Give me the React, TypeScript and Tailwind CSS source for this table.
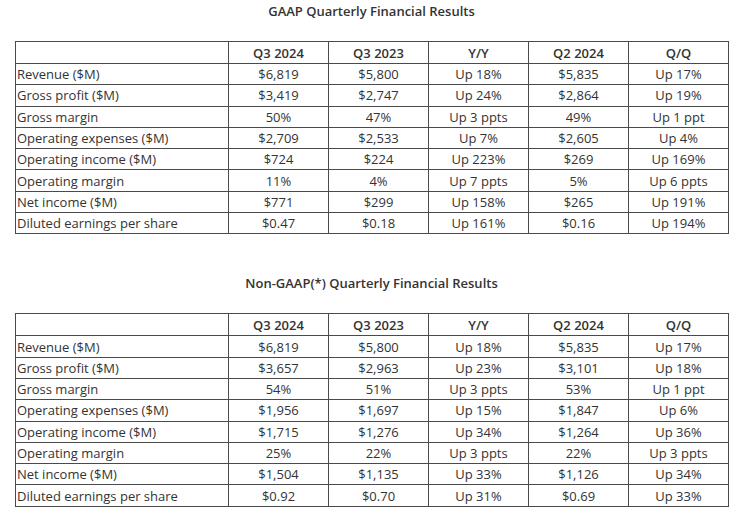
const gaap = [
  ["Revenue ($M)", "$6,819", "$5,800", "Up 18%", "$5,835", "Up 17%"],
  ["Gross profit ($M)", "$3,419", "$2,747", "Up 24%", "$2,864", "Up 19%"],
  ["Gross margin", "50%", "47%", "Up 3 ppts", "49%", "Up 1 ppt"],
  ["Operating expenses ($M)", "$2,709", "$2,533", "Up 7%", "$2,605", "Up 4%"],
  ["Operating income ($M)", "$724", "$224", "Up 223%", "$269", "Up 169%"],
  ["Operating margin", "11%", "4%", "Up 7 ppts", "5%", "Up 6 ppts"],
  ["Net income ($M)", "$771", "$299", "Up 158%", "$265", "Up 191%"],
  ["Diluted earnings per share", "$0.47", "$0.18", "Up 161%", "$0.16", "Up 194%"],
]

const nonGaap = [
  ["Revenue ($M)", "$6,819", "$5,800", "Up 18%", "$5,835", "Up 17%"],
  ["Gross profit ($M)", "$3,657", "$2,963", "Up 23%", "$3,101", "Up 18%"],
  ["Gross margin", "54%", "51%", "Up 3 ppts", "53%", "Up 1 ppt"],
  ["Operating expenses ($M)", "$1,956", "$1,697", "Up 15%", "$1,847", "Up 6%"],
  ["Operating income ($M)", "$1,715", "$1,276", "Up 34%", "$1,264", "Up 36%"],
  ["Operating margin", "25%", "22%", "Up 3 ppts", "22%", "Up 3 ppts"],
  ["Net income ($M)", "$1,504", "$1,135", "Up 33%", "$1,126", "Up 34%"],
  ["Diluted earnings per share", "$0.92", "$0.70", "Up 31%", "$0.69", "Up 33%"],
]

const headers = ["", "Q3 2024", "Q3 2023", "Y/Y", "Q2 2024", "Q/Q"]

function ResultsTable({ title, rows }: { title: string; rows: string[][] }) {
  return (
    <section className="w-[713px]">
      <h2 className="h-[24px] text-center text-[13px] font-semibold leading-[22px]">{title}</h2>
      <table className="mt-[17px] w-[713px] table-fixed border-collapse border border-[#4a4a4a]">
        <colgroup>
          <col className="w-[213px]" />
          <col className="w-[100px]" />
          <col className="w-[100px]" />
          <col className="w-[100px]" />
          <col className="w-[100px]" />
          <col className="w-[100px]" />
        </colgroup>
        <thead>
          <tr className="h-[22px]">
            {headers.map((h, i) => (
              <th key={i} className="border border-[#4a4a4a] p-0 text-center font-semibold leading-[18px]">
                {h}
              </th>
            ))}
          </tr>
        </thead>
        <tbody>
          {rows.map((row) => (
            <tr key={row[0]} className="h-[21.3px]">
              {row.map((cell, i) => (
                <td
                  key={i}
                  className={`border border-[#4a4a4a] p-0 leading-[18px] ${i === 0 ? "pl-[1px] text-left" : "text-center"}`}
                >
                  {cell}
                </td>
              ))}
            </tr>
          ))}
        </tbody>
      </table>
    </section>
  )
}

export default function App() {
  return (
    <div className="h-[513px] w-[743px] bg-white pl-[15px] pt-0 text-[13px] text-[#333] [font-family:'Open_Sans',sans-serif]">
      <ResultsTable title="GAAP Quarterly Financial Results" rows={gaap} />
      <div className="h-[38px]" />
      <ResultsTable title="Non-GAAP(*) Quarterly Financial Results" rows={nonGaap} />
    </div>
  )
}
